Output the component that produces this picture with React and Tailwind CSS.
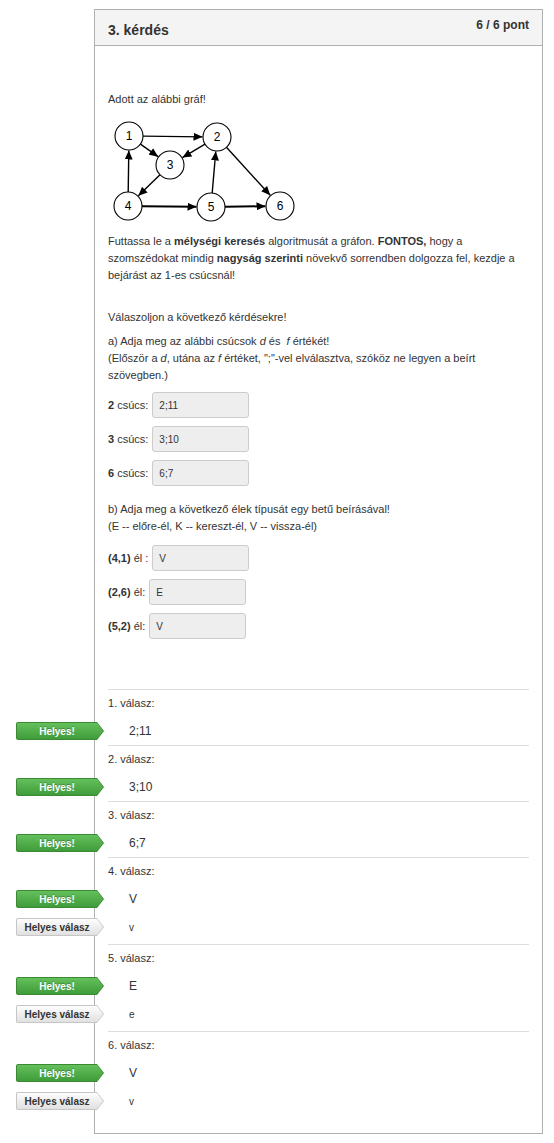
import React from "react";

function Graph() {
  const nodes = { 1: [21, 21], 2: [109, 22], 3: [62, 50], 4: [20, 91], 5: [103, 92], 6: [172, 91] };
  const edges = [[1, 2], [1, 3], [2, 3], [3, 4], [4, 1], [4, 5], [5, 2], [5, 6], [2, 6]];
  const r = 14;
  return (
    <svg width="192" height="110" className="block">
      <defs>
        <marker id="ah" markerUnits="userSpaceOnUse" markerWidth="9" markerHeight="8" refX="9" refY="4" orient="auto">
          <path d="M0,0 L9,4 L0,8 z" fill="#000" />
        </marker>
      </defs>
      {edges.map(([a, b]) => {
        const [x1, y1] = nodes[a];
        const [x2, y2] = nodes[b];
        const dx = x2 - x1, dy = y2 - y1, d = Math.hypot(dx, dy);
        const ux = dx / d, uy = dy / d;
        const thick = (a === 4 && b === 5) || (a === 5 && b === 6);
        return (
          <line
            key={a + "-" + b}
            x1={x1 + ux * r}
            y1={y1 + uy * r}
            x2={x2 - ux * (r + 0.5)}
            y2={y2 - uy * (r + 0.5)}
            stroke="#000"
            strokeWidth={thick ? 2 : 1.4}
            markerEnd="url(#ah)"
          />
        );
      })}
      {Object.entries(nodes).map(([k, [x, y]]) => (
        <g key={k}>
          <circle cx={x} cy={y} r={r} fill="#fff" stroke="#000" strokeWidth="1.1" />
          <text x={x} y={y + 4} textAnchor="middle" fontSize="12" fontFamily="Liberation Sans, Arial, sans-serif" fill="#000">{k}</text>
        </g>
      ))}
    </svg>
  );
}

function Green() {
  return (
    <div className="absolute left-[-92px] top-1/2 -translate-y-1/2 w-[88px] h-[18px] bg-[#3a8a34] rounded-l-[2px] [clip-path:polygon(0_0,calc(100%_-_7px)_0,100%_50%,calc(100%_-_7px)_100%,0_100%)]">
      <div className="absolute inset-[1px] rounded-l-[1px] bg-linear-to-b from-[#63c05b] to-[#3f9c3a] [clip-path:polygon(0_0,calc(100%_-_6px)_0,100%_50%,calc(100%_-_6px)_100%,0_100%)]"></div>
      <div className="relative w-[82px] h-full flex items-center justify-center text-[10px] font-bold text-white [text-shadow:0_-1px_0_rgba(0,0,0,0.25)]">Helyes!</div>
    </div>
  );
}

function Gray() {
  return (
    <div className="absolute left-[-92px] top-1/2 -translate-y-1/2 w-[88px] h-[18px] bg-[#c6c6c6] rounded-l-[2px] [clip-path:polygon(0_0,calc(100%_-_7px)_0,100%_50%,calc(100%_-_7px)_100%,0_100%)]">
      <div className="absolute inset-[1px] rounded-l-[1px] bg-linear-to-b from-[#fdfdfd] to-[#e1e1e1] [clip-path:polygon(0_0,calc(100%_-_6px)_0,100%_50%,calc(100%_-_6px)_100%,0_100%)]"></div>
      <div className="relative w-[82px] h-full flex items-center justify-center text-[10px] font-bold text-[#333]">Helyes válasz</div>
    </div>
  );
}

function Field({ value }) {
  return (
    <div className="w-[97px] h-[26px] bg-[#eeeeee] border border-[#cccccc] rounded-[3px] px-[6px] flex items-center text-[10px] text-[#333]">
      {value}
    </div>
  );
}

function Answer({ n, value, correct }) {
  return (
    <div className="border-t border-[#dddddd]">
      <div className="h-[27px] flex items-center text-[11px] text-[#333]">{n}. válasz:</div>
      <div className="relative h-[28px] flex items-center pl-[21px] text-[12px] text-[#333]">
        <Green />
        {value}
      </div>
      {correct && (
        <div className="relative h-[31px] flex items-center pl-[21px] pb-[3px] text-[10px] text-[#333]">
          <div className="absolute left-0 top-0 h-[28px] w-0">
            <Gray />
          </div>
          {correct}
        </div>
      )}
    </div>
  );
}

export default function App() {
  return (
    <div className="bg-white min-h-[1143px] pt-[9px] font-['Liberation_Sans',Arial,sans-serif] text-[#333]">
      <div className="ml-[94px] w-[449px] border border-[#b0b0b0]">
        <div className="h-[36px] bg-[#f4f4f4] border-b border-[#b0b0b0] flex justify-between px-[13px]">
          <div className="pt-[12px] text-[14px] leading-[17px] font-bold text-[#333]">3. kérdés</div>
          <div className="pt-[8px] text-[12px] leading-[15px] font-bold text-[#333]">6 / 6 pont</div>
        </div>
        <div className="px-[13px] pb-[15px] text-[11px] leading-[17px]">
          <div className="pt-[45px]">Adott az alábbi gráf!</div>
          <div className="mt-[7px]">
            <Graph />
          </div>
          <div className="mt-[8px]">
            Futtassa le a <b>mélységi keresés</b> algoritmusát a gráfon. <b>FONTOS,</b> hogy a szomszédokat mindig{" "}
            <b>nagyság szerinti</b> növekvő sorrendben dolgozza fel, kezdje a bejárást az 1-es csúcsnál!
          </div>
          <div className="mt-[25px]">Válaszoljon a következő kérdésekre!</div>
          <div className="mt-[7px]">
            a) Adja meg az alábbi csúcsok <i>d</i> és&nbsp; <i>f</i> értékét!
            <br />
            (Először a <i>d</i>, utána az <i>f</i> értéket, ";"-vel elválasztva, szóköz ne legyen a beírt szövegben.)
          </div>
          <div className="mt-[8px] flex flex-col gap-[8px]">
            <div className="flex items-center gap-[4px]">
              <span><b>2</b> csúcs:</span>
              <Field value="2;11" />
            </div>
            <div className="flex items-center gap-[4px]">
              <span><b>3</b> csúcs:</span>
              <Field value="3;10" />
            </div>
            <div className="flex items-center gap-[4px]">
              <span><b>6</b> csúcs:</span>
              <Field value="6;7" />
            </div>
          </div>
          <div className="mt-[15px]">
            b) Adja meg a következő élek típusát egy betű beírásával!
            <br />
            (E -- előre-él, K -- kereszt-él, V -- vissza-él)
          </div>
          <div className="mt-[10px] flex flex-col gap-[8px]">
            <div className="flex items-center gap-[4px]">
              <span><b>(4,1)</b> él :</span>
              <Field value="V" />
            </div>
            <div className="flex items-center gap-[4px]">
              <span><b>(2,6)</b> él:</span>
              <Field value="E" />
            </div>
            <div className="flex items-center gap-[4px]">
              <span><b>(5,2)</b> él:</span>
              <Field value="V" />
            </div>
          </div>
          <div className="mt-[50px]">
            <Answer n={1} value="2;11" />
            <Answer n={2} value="3;10" />
            <Answer n={3} value="6;7" />
            <Answer n={4} value="V" correct="v" />
            <Answer n={5} value="E" correct="e" />
            <Answer n={6} value="V" correct="v" />
          </div>
        </div>
      </div>
    </div>
  );
}
